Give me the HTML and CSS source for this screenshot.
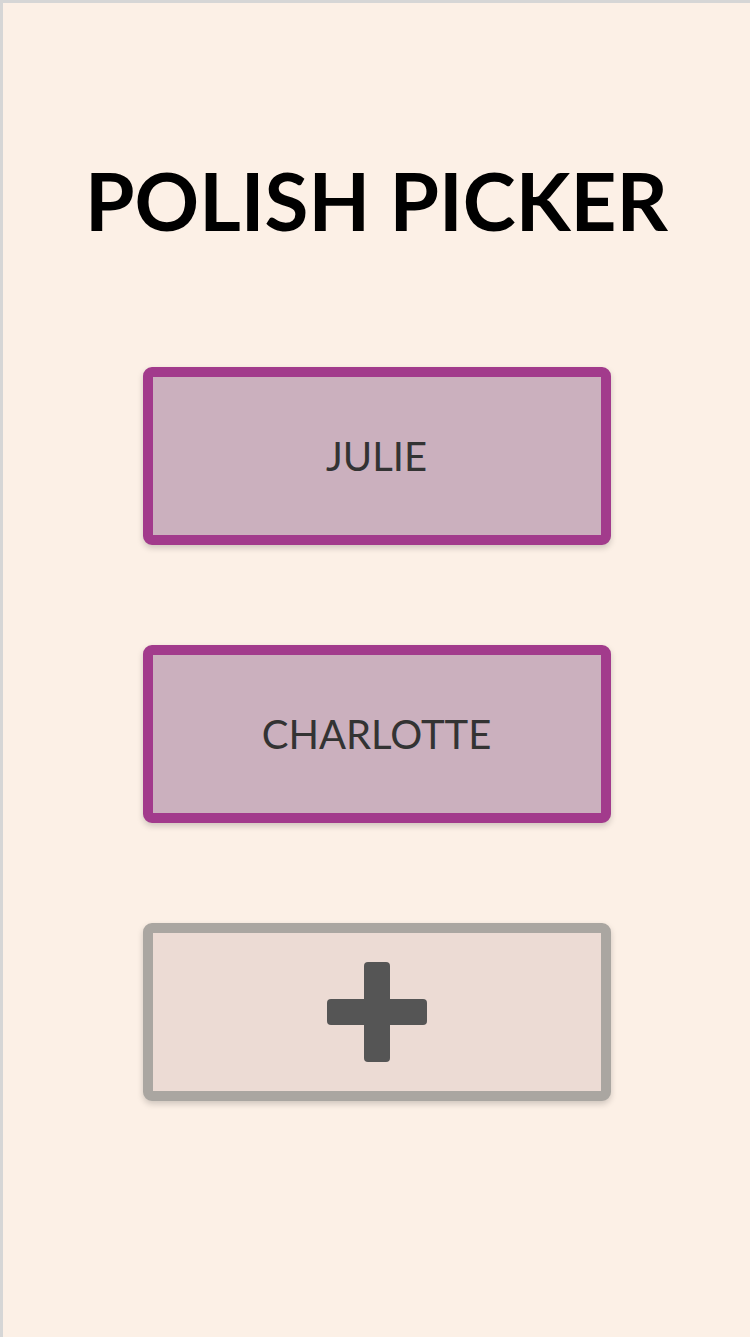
FILE: index.html
```html
<!DOCTYPE html>
<html lang="en">
<head>
<meta charset="utf-8">
<title>Polish Picker</title>
<link rel="stylesheet" href="styles.css">
</head>
<body>
<main class="page">
  <h1 class="title">POLISH PICKER</h1>
  <div class="list">
    <button class="card card--person">JULIE</button>
    <button class="card card--person">CHARLOTTE</button>
    <button class="card card--add" aria-label="Add">
      <svg class="plus" width="100" height="100" viewBox="0 0 100 100">
        <rect x="37" y="0" width="26" height="100" rx="4" fill="#555555"/>
        <rect x="0" y="37" width="100" height="26" rx="4" fill="#555555"/>
      </svg>
    </button>
  </div>
</main>
</body>
</html>
```
FILE: styles.css
```css
html, body {
  margin: 0;
  padding: 0;
  height: 100%;
}
body {
  background: #fcf0e6;
  font-family: Lato, "Liberation Sans", sans-serif;
}
.page {
  box-sizing: border-box;
  min-height: 100vh;
  border-top: 3px solid #d6d6d6;
  border-left: 3px solid #d6d6d6;
  background: #fcf0e6;
  padding-top: 157px;
  display: flex;
  flex-direction: column;
  align-items: center;
}
.title {
  margin: 0;
  font-size: 80px;
  line-height: 80px;
  font-weight: 700;
  color: #000;
  letter-spacing: 0;
}
.list {
  margin-top: 127px;
  display: flex;
  flex-direction: column;
  gap: 100px;
  align-items: center;
}
.card {
  box-sizing: border-box;
  width: 468px;
  height: 178px;
  border-radius: 9px;
  border: 10px solid #a23b8c;
  background: #cbb0be;
  box-shadow: 0 3px 6px rgba(0, 0, 0, 0.18);
  display: flex;
  align-items: center;
  justify-content: center;
  font-family: Lato, "Liberation Sans", sans-serif;
  font-size: 40px;
  color: #333333;
  padding: 0;
  cursor: pointer;
}
.card--add {
  border-color: #aaa6a1;
  background: #ecdbd4;
}
.plus {
  display: block;
}
```
